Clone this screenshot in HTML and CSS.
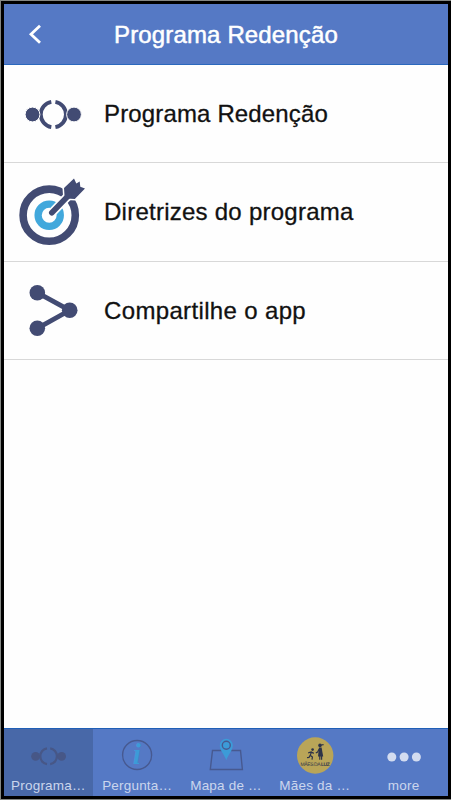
FILE: index.html
```html
<!DOCTYPE html>
<html lang="pt-BR">
    <head>
        <meta charset="utf-8">
        <meta name="viewport" content="width=device-width, initial-scale=1.0">
        <title>Programa Redenção</title>
        <link rel="stylesheet" href="styles.css">
    </head>
    <body>
        <div class="app">
            <header class="topbar">
                <a class="back" href="#" aria-label="Voltar">
                    <svg width="16" height="22" viewBox="0 0 16 22"><path d="M13 2.8 L4 11.3 L13 19.8"/></svg>
                </a>
                <h1>Programa Redenção</h1>
            </header>

            <main class="menu">
                <a class="row" href="#">
                    <svg class="icon" viewBox="0 0 80 80">
                        <path class="line ring" d="M38.3 27.9 A12.8 12.8 0 0 0 38.3 53.1 M42.4 27.9 A12.8 12.8 0 0 1 42.4 53.1"/>
                        <circle class="halo" cx="19.5" cy="40.5" r="7.4"/>
                        <circle class="halo" cx="61" cy="40.5" r="7.4"/>
                    </svg>
                    <span>Programa Redenção</span>
                </a>
                <a class="row tall" href="#">
                    <svg class="icon" viewBox="0 0 80 80">
                        <circle class="line target" cx="36.2" cy="43.2" r="26.1"/>
                        <circle class="bull" cx="36.2" cy="43.2" r="11.1"/>
                        <path class="gap" d="M38.8 40.8 L56 23"/>
                        <path class="head" d="M51 16 L61 6.5 L63.3 11.5 L66.7 9.5 L67.3 14.7 L72 16.5 L61.8 27 L53.7 26.5 L51.5 23.5 Z"/>
                        <path class="line shaft" d="M38.8 40.8 L56 23"/>
                    </svg>
                    <span>Diretrizes do programa</span>
                </a>
                <a class="row" href="#">
                    <svg class="icon" viewBox="0 0 80 80">
                        <path class="line link" d="M24.3 21.7 L56.7 39.3 L24.3 57.3"/>
                        <circle cx="24.3" cy="21.7" r="7.8"/>
                        <circle cx="56.7" cy="39.3" r="7.8"/>
                        <circle cx="24.3" cy="57.3" r="7.8"/>
                    </svg>
                    <span>Compartilhe o app</span>
                </a>
            </main>

            <nav class="tabs">
                <a class="tab active" href="#">
                    <svg viewBox="0 0 40 40">
                        <path class="thin ring2" d="M19 13.4 A8 8 0 0 0 19 29.2 M22.2 13.4 A8 8 0 0 1 22.2 29.2"/>
                        <circle cx="7.6" cy="21.3" r="4.4"/>
                        <circle cx="33.6" cy="21.3" r="4.4"/>
                    </svg>
                    <span>Programa…</span>
                </a>
                <a class="tab" href="#">
                    <svg viewBox="0 0 40 40">
                        <circle class="thin" cx="20.1" cy="20" r="14.5"/>
                        <text class="info" x="20" y="28.8">i</text>
                    </svg>
                    <span>Pergunta…</span>
                </a>
                <a class="tab" href="#">
                    <svg viewBox="0 0 40 40">
                        <path class="thin" d="M6.5 15.5 H34.5 L36.4 34.5 H4.3 Z"/>
                        <path class="pin" d="M20.3 25.2 C18.6 20 13.8 15.6 13.8 10.3 A6.5 6.6 0 0 1 26.8 10.3 C26.8 15.6 22 20 20.3 25.2 Z"/>
                        <circle class="thin" cx="20.3" cy="10.2" r="4"/>
                    </svg>
                    <span>Mapa de …</span>
                </a>
                <a class="tab" href="#">
                    <svg viewBox="0 0 40 40">
                        <circle class="badge" cx="20.2" cy="20.5" r="18.2"/>
                        <g class="people">
                            <circle cx="17.6" cy="14.6" r="1.3"/>
                            <path class="limbs" d="M16.6 16.8 L15.2 20.2 L17.4 22 L17 24.6 M15.2 20.2 L14 22.4 L12 22.6 M13.2 17.8 L16.2 17 L18.8 18.4"/>
                            <circle cx="25" cy="10.4" r="1.8"/>
                            <path d="M24 12.4 H26.6 L28.2 21.6 H23 Z"/>
                            <path class="limbs" d="M24.2 14 L22.6 17 L20.8 18 M24.8 21 V24.8 M26.6 21 V24.8 M26.2 10 L28.6 9.6"/>
                        </g>
                        <text class="caption" x="20" y="30.6">MÃES DA <tspan>LUZ</tspan></text>
                    </svg>
                    <span>Mães da …</span>
                </a>
                <a class="tab" href="#">
                    <svg class="dots" viewBox="0 0 40 40">
                        <circle cx="7.8" cy="22" r="4.5"/>
                        <circle cx="20.1" cy="22" r="4.5"/>
                        <circle cx="32.4" cy="22" r="4.5"/>
                    </svg>
                    <span>more</span>
                </a>
            </nav>
        </div>
    </body>
</html>
```
FILE: styles.css
```css
*
{
    box-sizing: border-box;
}

body
{
    margin: 0;
    height: 800px;
    padding: 1px 0 1px 1px;
    background: #848784;
    font-family: "Liberation Sans", Arial, sans-serif;
}

a
{
    color: inherit;
    text-decoration: none;
}

.app
{
    display: flex;
    flex-direction: column;
    height: 798px;
    border: 3px solid #000;
    background: #fefefe;
}

/* top bar */
.topbar
{
    display: grid;
    grid-template-columns: 60px 1fr 60px;
    align-items: center;
    height: 61px;
    border-bottom: 1px solid #2b68bd;
    background: #5579c5;
    color: #fff;
}

.topbar h1
{
    margin: 2px 0 0;
    font-size: 24px;
    font-weight: normal;
    line-height: 28px;
    letter-spacing: 0.15px;
    text-align: center;
    white-space: nowrap;
    -webkit-text-stroke: 0.5px #fff;
}

.back
{
    padding: 0 0 0 23px;
    line-height: 0;
}

.back path
{
    fill: none;
    stroke: #fff;
    stroke-width: 2.8;
}

/* menu */
.menu
{
    flex: 1;
}

.row
{
    display: flex;
    align-items: center;
    height: 98px;
    padding-left: 9px;
    border-bottom: 1px solid #d8d8d8;
    color: #111;
    font-size: 24px;
    letter-spacing: 0.15px;
    -webkit-text-stroke: 0.3px #111;
}

.row.tall
{
    height: 99px;
}

.row + .row
{
    letter-spacing: 0.25px;
}

.row + .row + .row
{
    letter-spacing: 0.35px;
}

.row span
{
    padding-left: 11px;
}

.icon
{
    width: 80px;
    height: 80px;
    fill: #424b73;
    -webkit-text-stroke: 0;
}

.line
{
    fill: none;
    stroke: #424b73;
}

.ring
{
    stroke-width: 3.9;
}

.halo
{
    stroke: #fefefe;
    stroke-width: 1;
}

.target
{
    stroke-width: 7.6;
}

.bull
{
    fill: none;
    stroke: #41a8dc;
    stroke-width: 7.3;
}

.gap
{
    stroke: #fefefe;
    stroke-width: 9;
    stroke-linecap: round;
}

.head
{
    stroke: #fefefe;
    stroke-width: 3;
    paint-order: stroke;
}

.shaft
{
    stroke-width: 5.6;
    stroke-linecap: round;
}

.link
{
    stroke-width: 4.8;
}

/* tab bar */
.tabs
{
    display: grid;
    grid-template-columns: repeat(5, 1fr);
    height: 68px;
    border-top: 1px solid #1f5fb7;
    background: #5579c5;
}

.tab
{
    display: flex;
    flex-direction: column;
    align-items: center;
    padding-top: 6px;
    color: #cbd6ed;
    font-size: 13.5px;
    line-height: 16px;
    letter-spacing: 0.2px;
    white-space: nowrap;
}

.tab.active
{
    background: #4868a8;
}

.tab svg
{
    width: 40px;
    height: 40px;
    margin-bottom: 3px;
    fill: #475787;
    overflow: visible;
}

.thin
{
    fill: none;
    stroke: #475990;
    stroke-width: 1.4;
}

.ring2
{
    stroke: #475787;
    stroke-width: 2.3;
}

.info
{
    fill: #3c9bd8;
    font: italic bold 29px "Liberation Serif", serif;
    text-anchor: middle;
}

.pin
{
    fill: #3c9bd8;
}

.badge
{
    fill: #b9a558;
}

.people
{
    fill: #2d3348;
}

.limbs
{
    fill: none;
    stroke: #2d3348;
    stroke-width: 1.2;
}

.caption
{
    fill: #34374a;
    font-size: 5px;
    letter-spacing: -0.4px;
    text-anchor: middle;
    text-rendering: geometricPrecision;
}

.caption tspan
{
    font-weight: bold;
}

.tab .dots
{
    fill: #d3dcf0;
}
```
